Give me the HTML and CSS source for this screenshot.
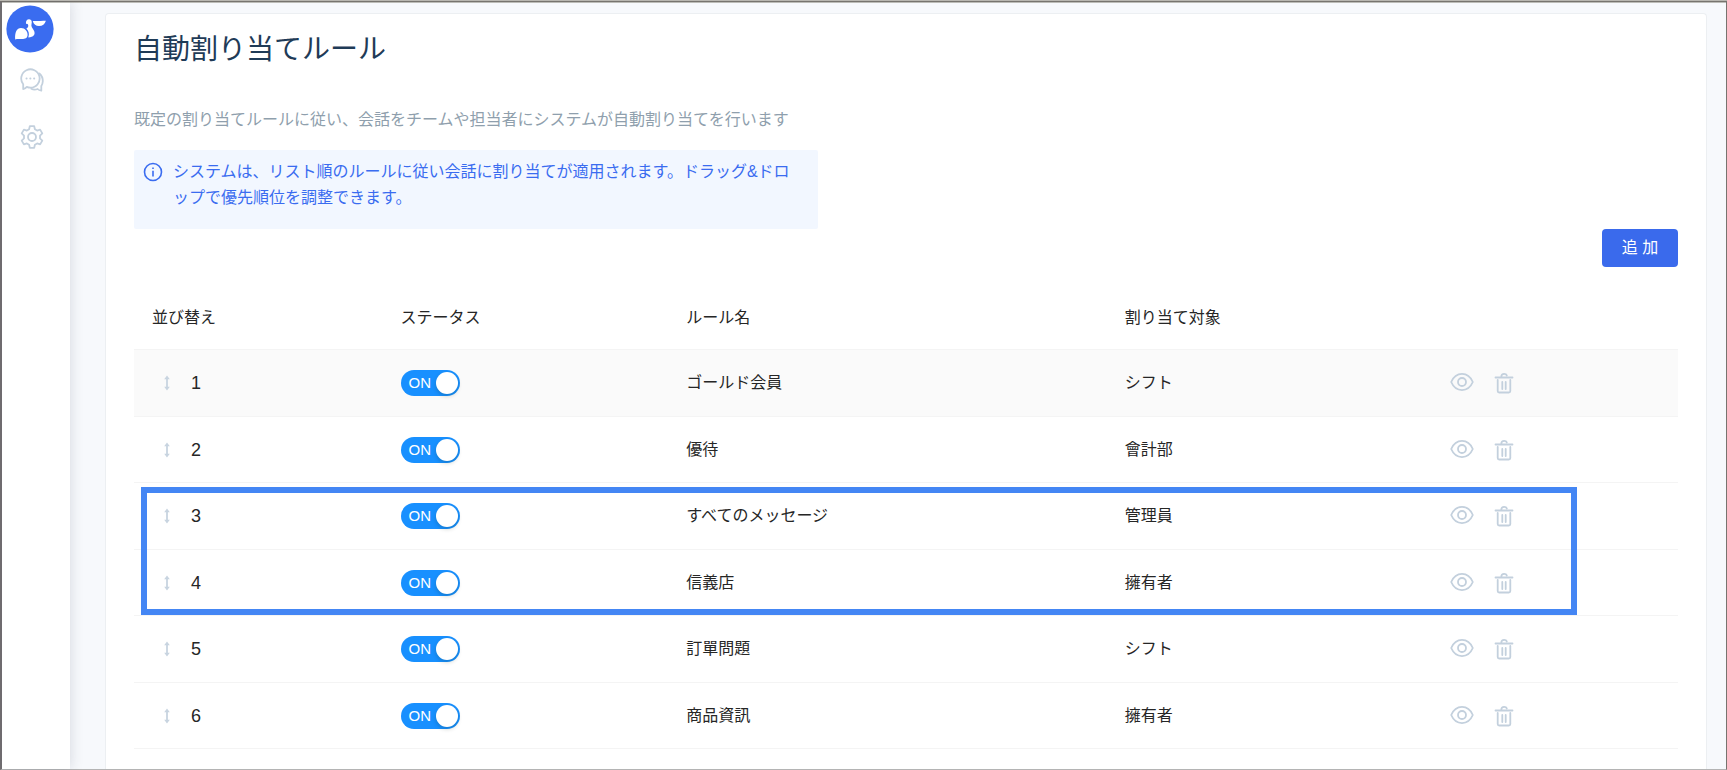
FILE: index.html
```
<!DOCTYPE html>
<html lang="ja">
<head>
  <meta charset="UTF-8">
  <meta name="viewport" content="width=device-width, initial-scale=1">
  <title>自動割り当てルール</title>
  <link rel="stylesheet" href="styles.css">
</head>
<body>

<svg class="sprite" aria-hidden="true">
  <symbol id="icon-drag" viewBox="0 0 6 16">
    <path d="M3 3v10" fill="none" stroke="currentColor" stroke-width="1.8"/>
    <path d="M3 .5 5.800 4.200H.2zM3 15.500.2 11.800h5.600z" fill="currentColor"/>
  </symbol>
  <symbol id="icon-eye" viewBox="0 0 24 20">
    <path d="M1.200 10C3.500 4.700 7.500 1.900 12 1.900S20.500 4.700 22.800 10C20.500 15.300 16.500 18.100 12 18.100S3.500 15.300 1.200 10z"/>
    <circle cx="12" cy="10" r="4"/>
  </symbol>
  <symbol id="icon-trash" viewBox="0 0 20 22">
    <path d="M1.500 5.500h17M3.700 8v11q0 1.500 1.500 1.500h9.600q1.500 0 1.500-1.500V8M8.300 10v7M11.700 10v7M7.300 5q0-3.200 2.900-3.200 2 0 2.600 1.600"/>
  </symbol>
</svg>

<div class="app">
  <aside class="sidebar">
    <a class="logo" href="#" aria-label="ホーム">
      <svg viewBox="6 5 48 48" width="48" height="48">
        <circle cx="30" cy="29" r="23.600" fill="#3a6cf0"/>
        <g fill="#fff">
          <path d="M15.200 39.500C14.600 32.500 16.800 28.200 21 28.100C25 28.100 27.800 31.500 27.600 35C27.400 38.300 25 39 22 39C19 39 17 38.700 15.200 39.500z"/>
          <path d="M26 23.800C25.600 21 27 19.200 29.200 19.300C31.600 19.500 32.300 21.600 31.500 24.200C30.900 26.500 32.400 28 33.600 30C36.200 34.200 33.500 37.400 28.300 37.400C29.600 33.500 28.700 31 26.400 28.400C28.800 27.300 28.600 25.300 27.600 24z"/>
          <path d="M32.800 20.900C37 21.300 41 20.700 45.900 20.700C44.900 24.300 42.500 25.900 39 25.900C36 25.900 33.500 24.300 32.800 20.900z"/>
        </g>
      </svg>
    </a>
    <nav class="menu">
      <a href="#" aria-label="会話">
        <svg class="icon" viewBox="0 0 24 24" width="24" height="24">
          <path d="M3.200 21v-4.800A9.200 9.200 0 1 1 10.500 19.700Q8.500 19.700 6.800 18.900Q5.500 20.600 3.200 21z"/>
          <path d="M19.400 5.500Q22.900 8.500 22.800 13.300Q22.700 16 21.300 18V22.700Q19 22.500 17.600 21Q14.300 22.500 11.300 20.800"/>
          <path d="M6.500 10.500h.1M10.300 10.500h.1M14.100 10.500h.1" stroke-width="2"/>
        </svg>
      </a>
      <a href="#" aria-label="設定">
        <svg class="icon" viewBox="0 0 24 24" width="24" height="24">
          <path d="M9.800 1.200h4.400l.7 3.100 2.200 1.300 3-1 2.200 3.800-2.300 2.200v2.800l2.300 2.200-2.200 3.800-3-1-2.200 1.300-.7 3.100H9.800l-.7-3.100-2.200-1.300-3 1-2.200-3.800L4 13.400v-2.800L1.700 8.400l2.200-3.800 3 1 2.200-1.300z"/>
          <circle cx="12" cy="12" r="4"/>
        </svg>
      </a>
    </nav>
  </aside>

  <main class="main">
    <section class="card">
      <h1 class="title">自動割り当てルール</h1>
      <p class="desc">既定の割り当てルールに従い、会話をチームや担当者にシステムが自動割り当てを行います</p>
      <div class="notice">
        <svg class="info" viewBox="0 0 20 20" width="20" height="20">
          <circle cx="10" cy="10" r="8.500"/>
          <path d="M10 8.800v5.700M10 5.500v1.600"/>
        </svg>
        <p>システムは、リスト順のルールに従い会話に割り当てが適用されます。ドラッグ&amp;ドロップで優先順位を調整できます。</p>
      </div>
      <div class="toolbar">
        <button class="add" type="button">追 加</button>
      </div>

      <div class="rules">
        <table>
          <thead>
            <tr>
              <th class="col-order">並び替え</th>
              <th class="col-status">ステータス</th>
              <th class="col-name">ルール名</th>
              <th class="col-target">割り当て対象</th>
              <th></th>
            </tr>
          </thead>
          <tbody>
            <tr class="hover">
              <td><div class="order"><svg class="drag"><use href="#icon-drag"/></svg>1</div></td>
              <td><label class="switch"><input type="checkbox" checked><span>ON</span></label></td>
              <td>ゴールド会員</td>
              <td>シフト</td>
              <td><div class="actions"><button type="button" aria-label="表示"><svg class="icon eye"><use href="#icon-eye"/></svg></button><button type="button" aria-label="削除"><svg class="icon trash"><use href="#icon-trash"/></svg></button></div></td>
            </tr>
            <tr>
              <td><div class="order"><svg class="drag"><use href="#icon-drag"/></svg>2</div></td>
              <td><label class="switch"><input type="checkbox" checked><span>ON</span></label></td>
              <td>優待</td>
              <td>會計部</td>
              <td><div class="actions"><button type="button" aria-label="表示"><svg class="icon eye"><use href="#icon-eye"/></svg></button><button type="button" aria-label="削除"><svg class="icon trash"><use href="#icon-trash"/></svg></button></div></td>
            </tr>
            <tr>
              <td><div class="order"><svg class="drag"><use href="#icon-drag"/></svg>3</div></td>
              <td><label class="switch"><input type="checkbox" checked><span>ON</span></label></td>
              <td>すべてのメッセージ</td>
              <td>管理員</td>
              <td><div class="actions"><button type="button" aria-label="表示"><svg class="icon eye"><use href="#icon-eye"/></svg></button><button type="button" aria-label="削除"><svg class="icon trash"><use href="#icon-trash"/></svg></button></div></td>
            </tr>
            <tr>
              <td><div class="order"><svg class="drag"><use href="#icon-drag"/></svg>4</div></td>
              <td><label class="switch"><input type="checkbox" checked><span>ON</span></label></td>
              <td>信義店</td>
              <td>擁有者</td>
              <td><div class="actions"><button type="button" aria-label="表示"><svg class="icon eye"><use href="#icon-eye"/></svg></button><button type="button" aria-label="削除"><svg class="icon trash"><use href="#icon-trash"/></svg></button></div></td>
            </tr>
            <tr>
              <td><div class="order"><svg class="drag"><use href="#icon-drag"/></svg>5</div></td>
              <td><label class="switch"><input type="checkbox" checked><span>ON</span></label></td>
              <td>訂單問題</td>
              <td>シフト</td>
              <td><div class="actions"><button type="button" aria-label="表示"><svg class="icon eye"><use href="#icon-eye"/></svg></button><button type="button" aria-label="削除"><svg class="icon trash"><use href="#icon-trash"/></svg></button></div></td>
            </tr>
            <tr>
              <td><div class="order"><svg class="drag"><use href="#icon-drag"/></svg>6</div></td>
              <td><label class="switch"><input type="checkbox" checked><span>ON</span></label></td>
              <td>商品資訊</td>
              <td>擁有者</td>
              <td><div class="actions"><button type="button" aria-label="表示"><svg class="icon eye"><use href="#icon-eye"/></svg></button><button type="button" aria-label="削除"><svg class="icon trash"><use href="#icon-trash"/></svg></button></div></td>
            </tr>
          </tbody>
        </table>
        <div class="highlight"></div>
      </div>
    </section>
  </main>
</div>

</body>
</html>
```

FILE: styles.css
```
* {
  box-sizing: border-box;
}
body {
  margin: 0;
  height: 100vh;
  overflow: hidden;
  border-top: 1px solid #b9b7b1;
  font-family: "Liberation Sans", "Noto Sans CJK JP", sans-serif;
  font-size: 16px;
  line-height: 26px;
  color: #262626;
}
h1, p {
  margin: 0;
}
.sprite {
  display: none;
}
.app {
  display: flex;
  height: 100%;
  border: 1px solid #77746f;
  border-left: 2px solid #737072;
  border-bottom-color: #b4b4b4;
}
.sidebar, .main {
  border-top: 1px solid #bdbdb8;
}
.icon {
  display: block;
  fill: none;
  stroke: #c3d0dd;
  stroke-width: 1.8;
  stroke-linecap: round;
  stroke-linejoin: round;
}

/* sidebar */
.sidebar {
  position: relative;
  z-index: 1;
  flex: 0 0 68px;
  padding: 2px 4px;
  background: #fff;
  box-shadow: 1px 0 12px rgba(40, 50, 75, 0.15);
}
.logo {
  display: block;
  height: 48px;
}
.menu {
  display: grid;
  gap: 33px;
  padding: 15px 14px;
}

/* content */
.main {
  flex: 1;
  display: flex;
  padding: 10px 19px 0 35px;
  background: #f7f9fc;
}
.card {
  flex: 1;
  padding: 16px 28px 0;
  background: #fff;
  border: 1px solid #eceff2;
  border-bottom: 0;
  border-radius: 4px 4px 0 0;
}
.title {
  font-size: 28px;
  font-weight: 400;
  line-height: 40px;
  color: #1f3b57;
}
.desc {
  margin-top: 37px;
  color: #8f9fad;
}
.notice {
  display: flex;
  gap: 10px;
  width: 684px;
  max-width: 100%;
  min-height: 79px;
  margin-top: 17px;
  padding: 9px 16px 18px 9px;
  background: #f2f7ff;
  border-radius: 2px;
  color: #3a6cf0;
  line-break: loose;
}
.notice p {
  flex: 1;
}
.info {
  flex: none;
  margin-top: 3px;
  fill: none;
  stroke: currentColor;
  stroke-width: 1.6;
}
.toolbar {
  display: flex;
  justify-content: flex-end;
}
.add {
  width: 76px;
  height: 38px;
  padding: 0;
  border: 0;
  border-radius: 4px;
  background: #3a6aec;
  color: #fff;
  font: inherit;
  cursor: pointer;
}

/* rules table */
.rules {
  position: relative;
  margin-top: 16px;
}
table {
  width: 100%;
  table-layout: fixed;
  border-collapse: separate;
  border-spacing: 0;
}
th, td {
  height: 67px;
  padding: 0 18px;
  border-bottom: 1px solid #f4f4f4;
  text-align: left;
  font-weight: 400;
}
th {
  padding-top: 4px;
}
tbody tr:nth-child(even) td {
  height: 66px;
}
.col-order {
  width: 16.1%;
}
.col-status {
  width: 18.5%;
}
.col-name {
  width: 28.4%;
}
.col-target {
  width: 21.1%;
}
.hover td {
  background: #fafafa;
}
.order {
  display: flex;
  align-items: center;
  gap: 21px;
  padding-left: 12px;
  font-size: 18px;
}
.drag {
  width: 6px;
  height: 16px;
  color: #c8d4e0;
}
.switch {
  position: relative;
  display: flex;
  align-items: center;
  justify-content: space-between;
  width: 59px;
  height: 26px;
  padding: 0 2px 0 8px;
  border-radius: 13px;
  background: #1890ff;
  color: #fff;
  font-size: 15px;
  cursor: pointer;
}
.switch::after {
  content: "";
  width: 22px;
  height: 22px;
  border-radius: 50%;
  background: #fff;
  box-shadow: 0 2px 4px rgba(0, 35, 11, 0.2);
}
.switch input {
  position: absolute;
  inset: 0;
  margin: 0;
  opacity: 0;
}
.actions {
  display: flex;
  align-items: flex-start;
  gap: 20px;
}
.actions button {
  padding: 0;
  border: 0;
  background: none;
  cursor: pointer;
}
.eye {
  width: 24px;
  height: 20px;
}
.trash {
  width: 20px;
  height: 22px;
}

/* frame over rules 3 and 4 */
.highlight {
  position: absolute;
  top: 204px;
  left: 7px;
  right: 101px;
  height: 128px;
  border: 6px solid #4486f4;
  pointer-events: none;
}
```
